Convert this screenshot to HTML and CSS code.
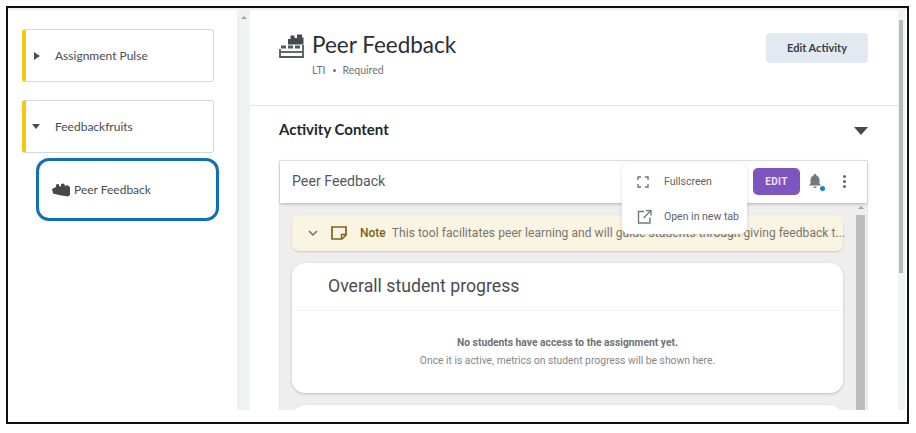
FILE: index.html
```html
<!DOCTYPE html>
<html lang="en">
<head>
<meta charset="utf-8">
<title>Peer Feedback</title>
<link rel="stylesheet" href="styles.css">
</head>
<body>
<div class="frame">
  <div class="shell">
    <aside class="side">
      <div class="unit">
        <svg class="caret" width="6" height="8" viewBox="0 0 6 8"><path d="M0 0L6 4L0 8Z"/></svg>
        <span>Assignment Pulse</span>
      </div>
      <div class="unit unit-open">
        <svg class="caret caret-down" width="8" height="6" viewBox="0 0 8 6"><path d="M0 0H8L4 5Z"/></svg>
        <span>Feedbackfruits</span>
      </div>
      <div class="selected">
        <svg class="brick" width="18" height="14" viewBox="0 0 18 14"><path d="M0 6L4 4V1.500L7 1V3L9 3.500V1L12 0.500L13 3L15 2L18 4V12L16 13.500L7 12L1 10.500Z"/></svg>
        <span>Peer Feedback</span>
      </div>
    </aside>
    <div class="side-scroll"><span class="arrow-up"></span></div>
    <main class="main">
      <header class="head">
        <div class="head-left">
          <svg class="lego" width="25" height="24" viewBox="0 0 25 24"><path d="M9 10.500V5H11.500V1.500H15.500V4H18V0.500H23V3.500H24.500V10.500Z" fill="#46494d"/><path d="M2 11.500H7V14.500H2ZM9 11.500H14V14.500H9ZM16 11.500H21V14.500H16Z" fill="#55585c"/><path d="M1 15V23H24V11" fill="none" stroke="#55585c" stroke-width="1.800"/><path d="M1 18H24" stroke="#55585c" stroke-width="1.800"/></svg>
          <div>
            <h1>Peer Feedback</h1>
            <p class="meta"><span>LTI</span><i></i><span>Required</span></p>
          </div>
        </div>
        <button class="edit-activity">Edit Activity</button>
      </header>
      <section class="content">
        <div class="content-title">
          <h2>Activity Content</h2>
          <svg width="14" height="8" viewBox="0 0 14 8"><path d="M0 0H14L7 8Z" fill="#45484c"/></svg>
        </div>
        <div class="tool">
          <div class="tool-bar">
            <span class="tool-name">Peer Feedback</span>
            <div class="tool-actions">
              <button class="edit">EDIT</button>
              <span class="bell">
                <svg width="14" height="16" viewBox="0 0 14 16"><path d="M7 1C8 1 8.500 1.700 8.500 2.500C10.500 3.200 11.500 5 11.500 7V10.500L13 12.500H1L2.500 10.500V7C2.500 5 3.500 3.200 5.500 2.500C5.500 1.700 6 1 7 1ZM5.500 13.500H8.500C8.500 14.500 8 15 7 15C6 15 5.500 14.500 5.500 13.500Z" fill="#75787c"/></svg>
                <b></b>
              </span>
              <span class="kebab"><i></i><i></i><i></i></span>
            </div>
          </div>
          <div class="tool-body">
            <div class="tool-page">
              <div class="note">
                <svg class="chev" width="10" height="6" viewBox="0 0 10 6"><path d="M1 1L5 5L9 1" fill="none" stroke="#6b6b66" stroke-width="1.400"/></svg>
                <svg class="note-ico" width="16" height="14" viewBox="0 0 16 14"><path d="M1 1H15V9L11 13H1Z" fill="none" stroke="#7d6414" stroke-width="1.700"/><path d="M10.500 13V8.500H15" fill="none" stroke="#7d6414" stroke-width="1.400"/></svg>
                <strong>Note</strong>
                <span class="note-text">This tool facilitates peer learning and will guide students through giving feedback t...</span>
              </div>
              <div class="card">
                <h3>Overall student progress</h3>
                <div class="card-body">
                  <p class="strong">No students have access to the assignment yet.</p>
                  <p>Once it is active, metrics on student progress will be shown here.</p>
                </div>
              </div>
              <div class="card card-next"></div>
            </div>
            <div class="tool-scroll"><span class="arrow-up"></span><span class="tool-thumb"></span></div>
          </div>
          <div class="menu">
            <div class="menu-item">
              <svg width="12" height="12" viewBox="0 0 12 12"><path d="M1 4V1H4M8 1H11V4M11 8V11H8M4 11H1V8" fill="none" stroke="#6f7276" stroke-width="1.400"/></svg>
              <span>Fullscreen</span>
            </div>
            <div class="menu-item">
              <svg width="15" height="15" viewBox="0 0 15 15"><path d="M7 2H1.500V13.500H13V8M9 1H14V6M14 1L6.500 8.500" fill="none" stroke="#75787c" stroke-width="1.400"/></svg>
              <span>Open in new tab</span>
            </div>
          </div>
        </div>
      </section>
    </main>
    <div class="main-scroll"><span class="main-thumb"></span></div>
  </div>
</div>
</body>
</html>
```

FILE: styles.css
```css
* { box-sizing: border-box; }
html, body { margin: 0; padding: 0; background: #fff; }
body { width: 916px; height: 433px; overflow: hidden; font-family: "Lato", sans-serif; }
.frame {
  margin: 6px 0 0 6px;
  width: 903px;
  height: 418px;
  border: 2px solid #111;
  padding-bottom: 12px;
  background: #fff;
}
.shell { display: flex; height: 402px; border-top: 2px solid #eef0f3; }
.side { width: 229px; flex: none; padding: 19px 0 0 14px; display: flex; flex-direction: column; }
.unit {
  width: 192px;
  height: 53px;
  border: 1px solid #d4d7db;
  border-left: 4px solid #f5c90f;
  border-radius: 3px;
  display: flex;
  align-items: center;
  padding-left: 8px;
  font-size: 12px;
  color: #494c50;
}
.unit span { margin-left: 15px; }
.unit-open { margin-top: 18px; }
.caret { fill: #4a4d51; flex: none; }
.caret-down { margin-left: -2px; }
.unit-open span { margin-left: 15px; }
.selected {
  margin: 5px 0 0 14px;
  width: 183px;
  height: 63px;
  border: 3px solid #0f6fb9;
  border-radius: 13px;
  display: flex;
  align-items: center;
  padding-left: 13px;
  font-size: 12px;
  color: #494c50;
}
.brick { fill: #45484c; flex: none; }
.selected span { margin-left: 4px; }
.side-scroll { width: 13px; flex: none; background: #f0f1f3; display: flex; justify-content: center; padding-top: 6px; }
.arrow-up { width: 0; height: 0; border-left: 3px solid transparent; border-right: 3px solid transparent; border-bottom: 3px solid #a4a6a9; }
.main { width: 648px; flex: none; position: relative; overflow: hidden; }
.head {
  height: 96px;
  border-bottom: 1px solid #dfe2e6;
  padding: 23px 30px 0 29px;
  display: flex;
  justify-content: space-between;
  align-items: flex-start;
}
.head-left { display: flex; align-items: flex-start; gap: 8px; }
.lego { margin-top: 1px; flex: none; }
h1 { margin: 0; font-size: 22.500px; line-height: 24px; font-weight: 400; color: #2a2e33; }
.meta { margin: 7px 0 0; display: flex; align-items: center; font-size: 10.500px; line-height: 12px; color: #6e7377; }
.meta i { width: 3px; height: 3px; margin: 0 7px; border-radius: 50%; background: #6e7377; }
.edit-activity {
  width: 102px;
  height: 30px;
  border: 0;
  border-radius: 4px;
  background: #e3e9f1;
  font-family: "Lato", sans-serif;
  font-weight: 700;
  font-size: 11px;
  color: #3a3d41;
  padding: 0 0 1px;
}
.content { padding: 0 30px 0 29px; }
.content-title { height: 54px; display: flex; align-items: center; justify-content: space-between; padding-bottom: 8px; }
h2 { margin: 0; font-size: 15px; font-weight: 700; color: #23272b; }
.content-title svg { margin-top: 4px; }
.tool { position: relative; width: 589px; border: 1px solid #e6e7e9; border-bottom: 0; height: 260px; font-family: "Roboto", sans-serif; }
.tool-bar {
  height: 42px;
  background: #fff;
  display: flex;
  align-items: center;
  justify-content: space-between;
  padding: 0 0 2px 12px;
  box-shadow: 0 1px 3px rgba(0,0,0,.25);
  position: relative;
}
.tool-name { font-size: 14.200px; color: #55595d; }
.tool-actions { display: flex; align-items: center; }
.edit {
  width: 47px;
  height: 27px;
  border: 0;
  border-radius: 5px;
  background: #7e55bf;
  color: #e9e2f5;
  font-family: "Roboto", sans-serif;
  font-weight: 700;
  font-size: 10px;
  letter-spacing: .4px;
  padding: 0;
}
.bell { position: relative; display: block; width: 14px; height: 16px; margin-left: 8px; }
.bell svg { display: block; }
.bell b { position: absolute; right: -3px; bottom: -2px; width: 5px; height: 5px; border-radius: 50%; background: #1f7ae0; }
.kebab { display: flex; flex-direction: column; gap: 2px; margin: 0 21px 0 21px; }
.kebab i { display: block; width: 3px; height: 3px; border-radius: 50%; background: #6a6064; }
.tool-body { display: flex; height: 208px; background: #eeeeee; overflow: hidden; }
.tool-page { width: 576px; padding: 12px 0 0 12px; flex: none; }
.note {
  width: 551px;
  height: 36px;
  background: #faf4e3;
  border-radius: 7px;
  box-shadow: 0 1px 2px rgba(0,0,0,.15);
  display: flex;
  align-items: center;
  padding: 0 0 1px 16px;
  font-size: 12px;
}
.chev, .note-ico { flex: none; }
.note-ico { margin-left: 13px; }
.note strong { font-weight: 500; color: #7d6414; margin-left: 13px; flex: none; }
.note-text { margin-left: 6px; color: #77756d; white-space: nowrap; letter-spacing: .07px; }
.card { width: 551px; height: 130px; margin-top: 12px; background: #fff; border-radius: 13px; box-shadow: 0 1px 3px rgba(0,0,0,.2); }
.card h3 { margin: 0; height: 48px; padding: 0 0 0 36px; line-height: 46px; font-size: 17.700px; font-weight: 400; color: #494c50; border-bottom: 1px solid #f3f3f3; }
.card-body { text-align: center; padding-top: 26px; font-size: 10.300px; color: #85878a; }
.card-body p { margin: 0; line-height: 12px; }
.card-body .strong { font-weight: 700; color: #6f7174; margin-bottom: 6px; }
.tool-scroll { flex: 1; display: flex; flex-direction: column; align-items: center; padding: 3px 3px 0 0; background: #eeeeee; }
.tool-thumb { width: 9px; flex: 1; margin-top: 6px; background: #bcbcbc; }
.menu {
  position: absolute;
  left: 342px;
  top: 2px;
  width: 125px;
  height: 71px;
  padding-top: 1px;
  background: #fff;
  border-radius: 7px;
  box-shadow: 0 1px 4px rgba(0,0,0,.14);
  z-index: 2;
  font-size: 10.500px;
  color: #5f6266;
}
.menu-item { height: 35px; display: flex; align-items: center; position: relative; padding-left: 42px; }
.menu-item svg { position: absolute; left: 15px; top: 50%; transform: translateY(-50%); }
.main-scroll { width: 7px; flex: none; background: #f1f2f3; padding: 10px 1px 0 0; }
.main-thumb { display: block; width: 4px; height: 253px; margin-left: 1px; background: #b9babc; }
```
